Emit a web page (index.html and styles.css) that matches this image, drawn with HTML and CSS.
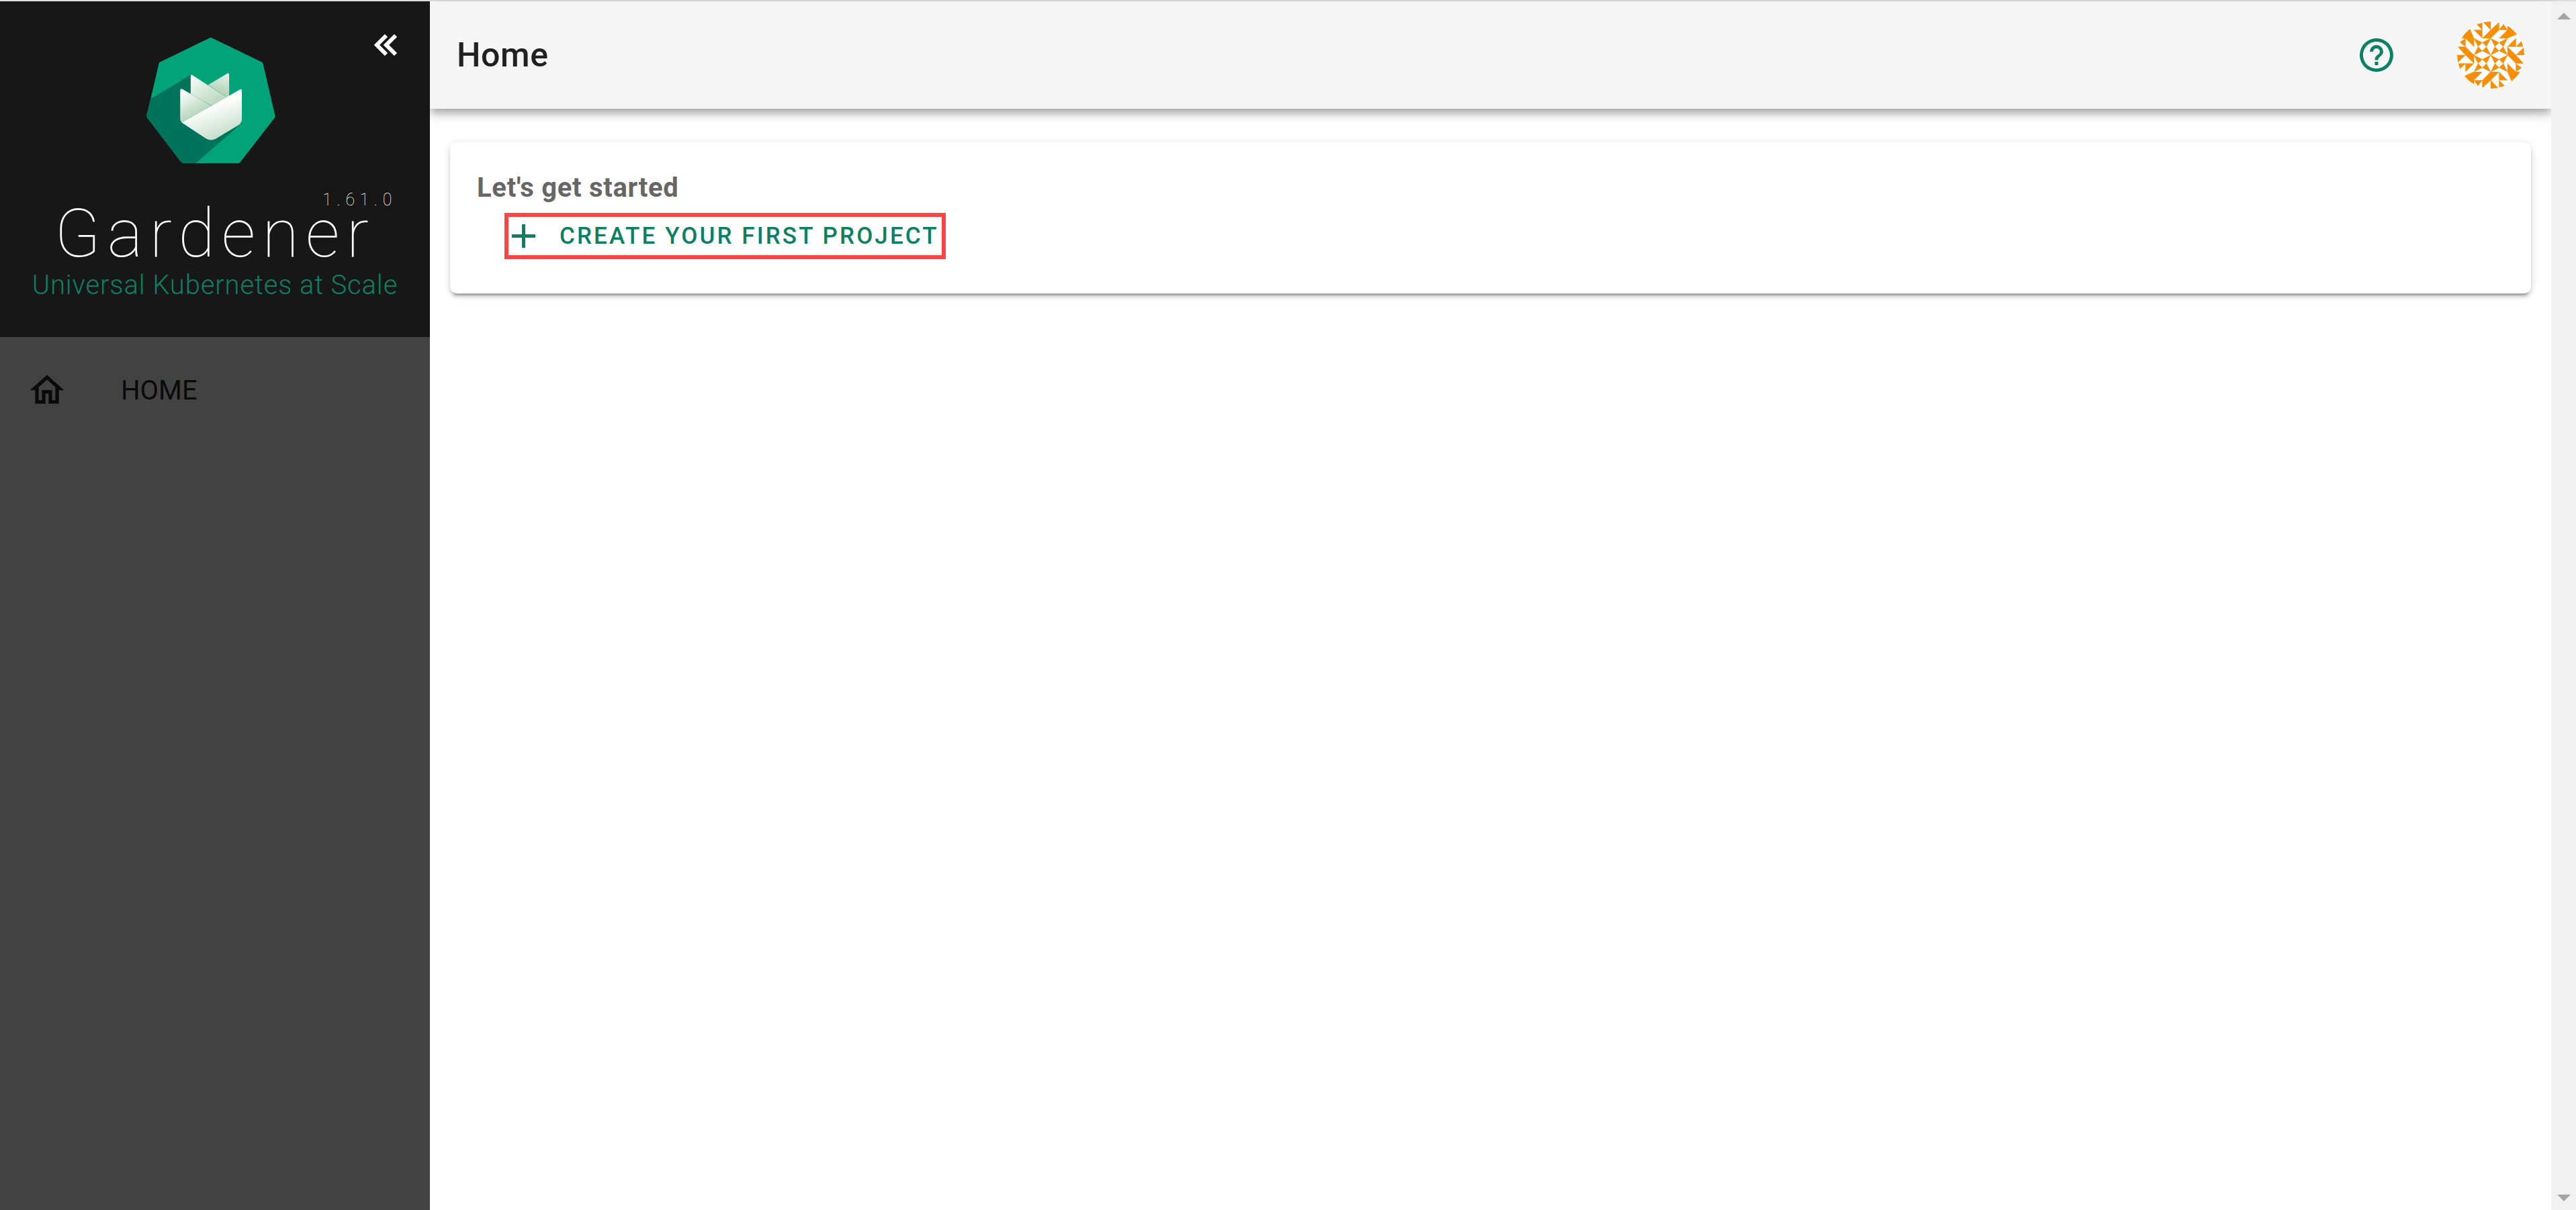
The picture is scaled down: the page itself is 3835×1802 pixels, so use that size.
FILE: index.html
```html
<!DOCTYPE html>
<html lang="en">
<head>
<meta charset="utf-8">
<title>Gardener</title>
<link rel="stylesheet" href="styles.css">
</head>
<body>
<div class="app">
  <aside class="sidebar">
    <div class="brand">
      <button class="collapse" aria-label="Collapse">
        <svg viewBox="0 0 36 32" class="collapse-icon"><path class="chev" d="M18 2L4 16L18 30M32 2L18 16L32 30"/></svg>
      </button>
      <svg class="logo" viewBox="115 78 575 562">
        <defs>
          <linearGradient id="gFront" gradientUnits="userSpaceOnUse" x1="395" y1="385" x2="450" y2="530"><stop offset="0" stop-color="#ffffff"/><stop offset="1" stop-color="#c2dcc7"/></linearGradient>
          <linearGradient id="gLeft" gradientUnits="userSpaceOnUse" x1="270" y1="320" x2="330" y2="430"><stop offset="0" stop-color="#ffffff"/><stop offset="1" stop-color="#b4d5bc"/></linearGradient>
          <linearGradient id="gMid" gradientUnits="userSpaceOnUse" x1="330" y1="255" x2="400" y2="370"><stop offset="0" stop-color="#f4f9f4"/><stop offset="1" stop-color="#bfdbc5"/></linearGradient>
          <linearGradient id="gBack" gradientUnits="userSpaceOnUse" x1="470" y1="240" x2="440" y2="345"><stop offset="0" stop-color="#e8f2ea"/><stop offset="1" stop-color="#a5ccaf"/></linearGradient>
        </defs>
        <path class="hex" d="M402 90L624 198L678 430L524 628H281L127 430L181 198Z"/>
        <path class="hex-shadow" d="M133 352L315 243L530 470L335 640H285Q272 640 264 630L122 442Q112 430 116 418Z"/>
        <path fill="url(#gBack)" d="M390 290L477 238Q484 235 484 243V342L472 345Z"/>
        <path fill="url(#gMid)" d="M312 250Q312 241 320 246L472 345L405 382L312 330Z"/>
        <path fill="url(#gLeft)" d="M265 315Q265 304 275 309L405 383L272 458Q265 452 265 440Z"/>
        <path fill="url(#gFront)" d="M272 458L533 310Q541 306 541 315V440Q541 460 525 470L425 530Q403 543 381 530Z"/>
      </svg>
      <div class="wordmark">
        <span class="version">1.61.0</span>
        <span class="name">Gardener</span>
      </div>
      <div class="tagline">Universal Kubernetes at Scale</div>
    </div>
    <nav class="nav">
      <a class="nav-item">
        <svg viewBox="0 0 24 24" class="nav-icon"><path class="nav-path" d="M12 5.69L17 10.19V18H15V12H9V18H7V10.19L12 5.69M12 3L2 12H5V20H11V14H13V20H19V12H22L12 3Z"/></svg>
        <span>HOME</span>
      </a>
    </nav>
  </aside>
  <main class="main">
    <header class="toolbar">
      <h1 class="title">Home</h1>
      <svg viewBox="0 0 24 24" class="help"><path fill="currentColor" d="M11 18H13V16H11V18M12 2A10 10 0 0 0 2 12A10 10 0 0 0 12 22A10 10 0 0 0 22 12A10 10 0 0 0 12 2M12 20C7.59 20 4 16.41 4 12C4 7.59 7.59 4 12 4C16.41 4 20 7.59 20 12C20 16.41 16.41 20 12 20M12 6A4 4 0 0 0 8 10H10A2 2 0 0 1 12 8A2 2 0 0 1 14 10C14 12 11 11.75 11 15H13C13 12.75 16 12.5 16 10A4 4 0 0 0 12 6Z"/></svg>
      <svg class="avatar" viewBox="0 0 100 100">
        <defs>
          <clipPath id="avClip"><circle cx="50" cy="50" r="50"/></clipPath>
          <g id="quad">
            <path d="M25 25L37.5 31.25L31.25 37.5ZM50 25L37.5 31.25L43.75 37.5ZM25 50L31.25 37.5L37.5 43.75ZM50 50L43.75 37.5L37.5 43.75Z"/>
            <path d="M19 11L25 25H4ZM12.5 25H25V37.5ZM4 31L12.5 25V37.5ZM1 37.5H12.5V50ZM12.5 37.5L25 50H12.5Z"/>
            <path d="M25 12.5H37.5V25ZM37.5 25L50 12.5V25ZM29 4L37.5 2V12.5ZM39 1L50 0V12.5Z"/>
          </g>
        </defs>
        <circle class="avatar-bg" cx="50" cy="50" r="50"/>
        <g class="avatar-fg" clip-path="url(#avClip)">
          <use href="#quad"/>
          <use href="#quad" transform="rotate(90 50 50)"/>
          <use href="#quad" transform="rotate(180 50 50)"/>
          <use href="#quad" transform="rotate(270 50 50)"/>
        </g>
      </svg>
    </header>
    <section class="content">
      <div class="card">
        <div class="card-title">Let's get started</div>
        <a class="create">
          <svg viewBox="5 5 14 14" class="plus"><path fill="currentColor" d="M19 13H13V19H11V13H5V11H11V5H13V11H19V13Z"/></svg>
          <span>CREATE YOUR FIRST PROJECT</span>
        </a>
      </div>
    </section>
  </main>
  <div class="scrollbar">
    <span class="arrow-up"></span>
    <span class="arrow-down"></span>
  </div>
</div>
</body>
</html>
```
FILE: styles.css
```css
* { box-sizing: border-box; }
html, body { margin: 0; height: 100%; overflow: hidden; background: #fff; }
body { font-family: Roboto, "Liberation Sans", sans-serif; }
.app { display: flex; height: 1802px; border-top: 2px solid #dedede; background: #fff; }
.sidebar { width: 640px; flex: none; background: #424242; display: flex; flex-direction: column; position: relative; z-index: 2; }
.brand { height: 500px; background: #171717; position: relative; display: flex; flex-direction: column; align-items: center; padding-top: 54px; }
.collapse { position: absolute; top: 49px; left: 557px; width: 36px; height: 32px; padding: 0; border: 0; background: none; }
.collapse-icon { width: 36px; height: 32px; display: block; }
.chev { fill: none; stroke: #fff; stroke-width: 6; }
.logo { width: 192px; height: 187px; display: block; flex: none; margin-right: 12px; }
.hex { fill: #02a378; stroke: #02a378; stroke-width: 24; stroke-linejoin: round; }
.hex-shadow { fill: #00745a; }
.wordmark { position: relative; margin-top: 67px; height: 76px; }
.name { font-size: 100px; font-weight: 100; letter-spacing: 10px; color: #fff; line-height: 76px; display: block; }
.version { position: absolute; right: -32px; top: -24px; font-size: 25px; font-weight: 100; letter-spacing: 7.5px; line-height: 24px; color: #fff; }
.tagline { font-size: 40px; font-weight: 300; letter-spacing: 0.85px; color: #0b8062; line-height: 44px; margin-top: 17px; white-space: nowrap; }
.nav { padding-top: 49px; }
.nav-item { display: flex; align-items: center; height: 60px; padding-left: 40px; color: #0a0a0a; font-size: 40px; font-weight: 400; }
.nav-icon { width: 60px; height: 60px; margin-right: 80px; }
.nav-path { fill: currentColor; stroke: currentColor; stroke-width: 0.1; }
.main { flex: 1; min-width: 0; display: flex; flex-direction: column; }
.toolbar { height: 160px; flex: none; background: #f5f5f5; display: flex; align-items: center; padding: 0 40px; box-shadow: 0 5px 10px -2.5px rgba(0,0,0,.2), 0 10px 12.5px 0 rgba(0,0,0,.14), 0 2.5px 25px 0 rgba(0,0,0,.12); position: relative; }
.title { flex: 1; margin: 0; font-size: 50px; font-weight: 500; letter-spacing: 0.6px; color: #212121; }
.help { width: 60px; height: 60px; color: #0b8062; margin-right: 90px; }
.avatar { width: 100px; height: 100px; }
.avatar-bg { fill: #fff; }
.avatar-fg { fill: #f78e08; stroke: #f78e08; stroke-width: 0.3; }
.content { padding: 50px 30px 0; }
.card { height: 225px; background: #fff; border-radius: 10px; padding: 43px 40px 0; box-shadow: 0 7.5px 2.5px -5px rgba(0,0,0,.2), 0 5px 5px 0 rgba(0,0,0,.14), 0 2.5px 12.5px 0 rgba(0,0,0,.12); }
.card-title { font-size: 40px; font-weight: 700; letter-spacing: 0.7px; color: #666; line-height: 50px; }
.create { display: flex; align-items: center; margin: 12px 0 0 41px; height: 69px; width: 657px; border: 6px solid #ff4444; padding-left: 5px; color: #0b8062; font-size: 35px; font-weight: 500; letter-spacing: 3.1px; white-space: nowrap; }
.plus { width: 35px; height: 35px; margin-right: 36px; flex: none; }
.scrollbar { width: 37px; flex: none; background: #f1f1f1; display: flex; flex-direction: column; justify-content: space-between; align-items: center; padding: 17px 0 13px; position: relative; z-index: 2; }
.arrow-up { width: 0; height: 0; border-left: 10px solid transparent; border-right: 10px solid transparent; border-bottom: 10px solid #a3a3a3; }
.arrow-down { width: 0; height: 0; border-left: 10px solid transparent; border-right: 10px solid transparent; border-top: 10px solid #a3a3a3; }
```
